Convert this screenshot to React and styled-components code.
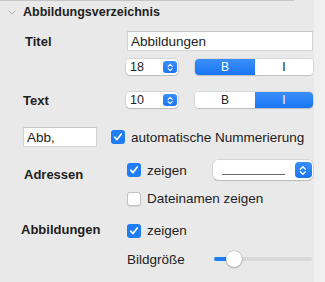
import styled, { createGlobalStyle } from "styled-components";

const GlobalStyle = createGlobalStyle`
  html, body {
    margin: 0;
    padding: 0;
    background: #f0f0f0;
  }
  body {
    font-family: "Liberation Sans", Arial, sans-serif;
    color: #222;
  }
`;

const blue = "#1f7df6";

const Shell = styled.div`
  display: flex;
  width: 325px;
  height: 282px;
  background: #f0f0f0;
`;

const Panel = styled.div`
  width: 314px;
  height: 282px;
  background: #e9e9e9;
  display: flex;
  flex-direction: column;
`;

const Separator = styled.div`
  width: 294px;
  height: 1px;
  background: #c6c6c6;
`;

const Header = styled.div`
  display: flex;
  align-items: center;
  height: 22px;
  padding-left: 8px;
  gap: 7px;
  font-size: 12.5px;
  font-weight: 700;
  color: #1e1e1e;
`;

const Row = styled.div`
  display: flex;
  align-items: center;
  height: ${(p) => p.$h}px;
  margin-top: ${(p) => p.$mt}px;
  padding-left: ${(p) => p.$pl ?? 0}px;
`;

const Label = styled.div`
  width: ${(p) => p.$w ?? 104}px;
  padding-left: ${(p) => p.$indent ?? 22}px;
  box-sizing: border-box;
  font-size: 13px;
  font-weight: 700;
  color: #1e1e1e;
  margin-top: ${(p) => p.$dy ?? 0}px;
  flex-shrink: 0;
`;

const Controls = styled.div`
  display: flex;
  align-items: center;
  gap: ${(p) => p.$gap ?? 0}px;
`;

const TextField = styled.div`
  width: ${(p) => p.$w}px;
  height: 20px;
  box-sizing: border-box;
  background: #fff;
  border: 1px solid #d4d4d4;
  border-top-color: #c8c8c8;
  padding-left: 3px;
  display: flex;
  align-items: center;
  font-size: 13.5px;
  color: #222;
`;

const Stepper = styled.div`
  width: 52px;
  height: 16px;
  box-sizing: border-box;
  background: #fff;
  border-radius: 4px;
  box-shadow: 0 0 0 0.5px rgba(0, 0, 0, 0.18), 0 1px 1px rgba(0, 0, 0, 0.12);
  display: flex;
  align-items: center;
  justify-content: space-between;
  padding: 0 1px 0 4px;
  font-size: 12.5px;
  color: #222;
`;

const BlueButton = styled.div`
  width: ${(p) => p.$w}px;
  height: ${(p) => p.$h}px;
  border-radius: ${(p) => p.$r}px;
  background: linear-gradient(#3a8ff9, #1a76f2);
  display: flex;
  align-items: center;
  justify-content: center;
`;

const Segmented = styled.div`
  display: flex;
  width: 118px;
  height: 16px;
  margin-left: 17px;
  border-radius: 4px;
  overflow: hidden;
  background: #fff;
  box-shadow: 0 0 0 0.5px rgba(0, 0, 0, 0.15), 0 1px 1px rgba(0, 0, 0, 0.12);
`;

const Segment = styled.div`
  flex: ${(p) => p.$flex};
  display: flex;
  align-items: center;
  justify-content: center;
  font-size: 12px;
  background: ${(p) => (p.$on ? `linear-gradient(#3a8ff9, #1a76f2)` : "#fff")};
  color: ${(p) => (p.$on ? "#fff" : "#222")};
`;

const Check = styled.div`
  width: 14px;
  height: 14px;
  box-sizing: border-box;
  border-radius: 3px;
  flex-shrink: 0;
  display: flex;
  align-items: center;
  justify-content: center;
  background: ${(p) => (p.$on ? blue : "#fff")};
  border: ${(p) => (p.$on ? "none" : "1px solid #c2c2c2")};
  box-shadow: ${(p) => (p.$on ? "none" : "0 0.5px 1px rgba(0,0,0,0.08)")};
`;

const CheckLabel = styled.label`
  display: flex;
  align-items: center;
  gap: 6px;
  font-size: 13.5px;
  color: #222;
`;

const Popup = styled.div`
  width: 100px;
  height: 20px;
  box-sizing: border-box;
  margin-left: ${(p) => p.$ml}px;
  background: #fff;
  border-radius: 5px;
  box-shadow: 0 0 0 0.5px rgba(0, 0, 0, 0.18), 0 1px 1px rgba(0, 0, 0, 0.12);
  display: flex;
  align-items: center;
  justify-content: space-between;
  padding: 0 1px 0 9px;
`;

const LineSample = styled.div`
  width: 63px;
  height: 1px;
  margin-top: 8px;
  background: #6a6a6a;
`;

const SmallLabel = styled.div`
  font-size: 13.5px;
  color: #222;
  width: 87px;
  flex-shrink: 0;
`;

const Slider = styled.div`
  position: relative;
  width: 98px;
  height: 4px;
  border-radius: 2px;
  background: #d9d9d9;
`;

const SliderFill = styled.div`
  height: 100%;
  border-radius: 2px;
  background: ${blue};
`;

const Knob = styled.div`
  position: absolute;
  top: 50%;
  width: 16px;
  height: 16px;
  border-radius: 50%;
  background: #fff;
  transform: translate(-50%, -50%);
  box-shadow: 0 0 0 0.5px rgba(0, 0, 0, 0.2), 0 1px 2px rgba(0, 0, 0, 0.25);
`;

function Arrows({ size = 10 }) {
  return (
    <svg width={size * 0.7} height={size} viewBox="0 0 7 10">
      <path d="M1.2 3.8 L3.5 1.6 L5.8 3.8" fill="none" stroke="#fff" strokeWidth="1.2" strokeLinecap="round" strokeLinejoin="round" />
      <path d="M1.2 6.2 L3.5 8.4 L5.8 6.2" fill="none" stroke="#fff" strokeWidth="1.2" strokeLinecap="round" strokeLinejoin="round" />
    </svg>
  );
}

function CheckBox({ on }) {
  return (
    <Check $on={on}>
      {on && (
        <svg width="10" height="10" viewBox="0 0 10 10">
          <path d="M1.8 5.2 L4 7.6 L8.3 2" fill="none" stroke="#fff" strokeWidth="1.7" strokeLinecap="round" strokeLinejoin="round" />
        </svg>
      )}
    </Check>
  );
}

function NumberStepper({ value }) {
  return (
    <Stepper>
      <span>{value}</span>
      <BlueButton $w={14} $h={12} $r={3}>
        <Arrows size={9} />
      </BlueButton>
    </Stepper>
  );
}

function BoldItalic({ bold }) {
  return (
    <Segmented>
      <Segment $flex={60} $on={bold}>B</Segment>
      <Segment $flex={58} $on={!bold}>I</Segment>
    </Segmented>
  );
}

export default function App() {
  const size = 20;
  return (
    <>
      <GlobalStyle />
      <Shell>
        <Panel>
          <Separator />
          <Header>
            <svg width="8" height="5" viewBox="0 0 8 5">
              <path d="M0.5 0.5 L4 4 L7.5 0.5" fill="none" stroke="#b0b0b0" strokeWidth="1" />
            </svg>
            Abbildungsverzeichnis
          </Header>

          <Row $h={20} $mt={8}>
            <Label $indent={25} $w={127} $dy={1}>Titel</Label>
            <TextField $w={186}>Abbildungen</TextField>
          </Row>

          <Row $h={16} $mt={8}>
            <Label $w={126} />
            <NumberStepper value="18" />
            <BoldItalic bold />
          </Row>

          <Row $h={16} $mt={17}>
            <Label $indent={23} $w={126}>Text</Label>
            <NumberStepper value="10" />
            <BoldItalic bold={false} />
          </Row>

          <Row $h={20} $mt={19} $pl={23}>
            <Controls $gap={14}>
              <TextField $w={74}>Abb,</TextField>
              <CheckLabel>
                <CheckBox on />
                automatische Nummerierung
              </CheckLabel>
            </Controls>
          </Row>

          <Row $h={20} $mt={13}>
            <Label $indent={24} $w={127} $dy={9}>Adressen</Label>
            <Controls $gap={0}>
              <CheckLabel>
                <CheckBox on />
                zeigen
              </CheckLabel>
              <Popup $ml={26}>
                <LineSample />
                <BlueButton $w={17} $h={16} $r={4}>
                  <Arrows size={11} />
                </BlueButton>
              </Popup>
            </Controls>
          </Row>

          <Row $h={15} $mt={11}>
            <Label $w={127} />
            <CheckLabel>
              <CheckBox />
              Dateinamen zeigen
            </CheckLabel>
          </Row>

          <Row $h={15} $mt={17}>
            <Label $indent={21} $w={127} $dy={-2}>Abbildungen</Label>
            <CheckLabel>
              <CheckBox on />
              zeigen
            </CheckLabel>
          </Row>

          <Row $h={16} $mt={13}>
            <Label $w={127} />
            <SmallLabel>Bildgröße</SmallLabel>
            <Slider>
              <SliderFill style={{ width: `${size}%` }} />
              <Knob style={{ left: `${size}%` }} />
            </Slider>
          </Row>
        </Panel>
      </Shell>
    </>
  );
}
